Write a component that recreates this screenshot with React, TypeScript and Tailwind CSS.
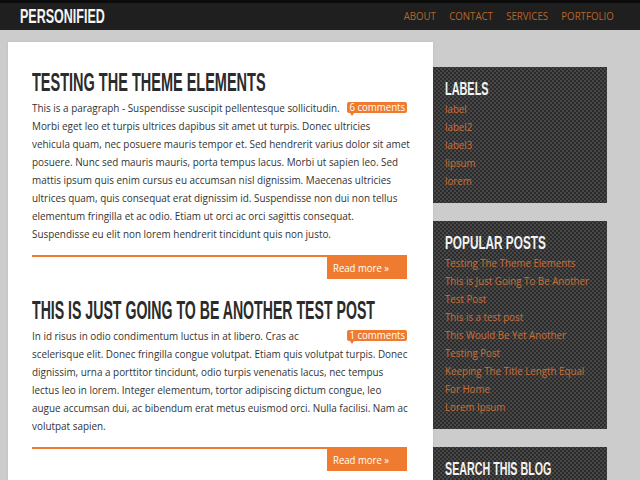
const heading = "font-['Liberation_Sans',sans-serif] font-bold uppercase origin-left whitespace-nowrap";
const squeezed = "block origin-left scale-x-[0.9] whitespace-nowrap";
const body = ["Morbi eget leo et turpis ultrices dapibus sit amet ut turpis. Donec ultricies","vehicula quam, nec posuere mauris tempor et. Sed hendrerit varius dolor sit amet","posuere. Nunc sed mauris mauris, porta tempus lacus. Morbi ut sapien leo. Sed","mattis ipsum quis enim cursus eu accumsan nisl dignissim. Maecenas ultricies","ultrices quam, quis consequat erat dignissim id. Suspendisse non dui non tellus","elementum fringilla et ac odio. Etiam ut orci ac orci sagittis consequat.","Suspendisse eu elit non lorem hendrerit tincidunt quis non justo."];
const body2 = ["scelerisque elit. Donec fringilla congue volutpat. Etiam quis volutpat turpis. Donec","dignissim, urna a porttitor tincidunt, odio turpis venenatis lacus, nec tempus","lectus leo in lorem. Integer elementum, tortor adipiscing dictum congue, leo","augue accumsan dui, ac bibendum erat metus euismod orci. Nulla facilisi. Nam ac","volutpat sapien."];

function Post({ title, first, badge, lines, sx, mt }: { title: string; first: string; badge: string; lines: string[]; sx: string; mt: string }) {
  return (
    <article className={mt}>
      <h2 className={`${heading} ${sx} text-[25px] leading-[32px] text-[#2b2b2b]`}>{title}</h2>
      <div className="mt-[1px] text-[11px] leading-[18px] text-[#333]">
        <div className="relative">
          <span className={squeezed}>{first}</span>
          <span className="absolute right-[1px] top-[3px] h-[11px] w-[60px] rounded-[2px] bg-[#ee7b30] text-center text-[10.5px] leading-[10px] text-[#fff]">
            <span className="block scale-x-[0.92] whitespace-nowrap">{badge}</span>
            <span className="absolute left-[3px] top-[11px] h-0 w-0 border-x-[2px] border-t-[3px] border-x-transparent border-t-[#ee7b30]" />
          </span>
        </div>
        {lines.map((l) => <div key={l} className={squeezed}>{l}</div>)}
      </div>
      <div className="mt-[12px] mr-[1px] flex justify-end border-t-[2px] border-[#ee7b30]">
        <span className="-mt-[1px] h-[23px] w-[80px] bg-[#ee7b30] pl-[6px] text-[11px] leading-[23px] text-[#fff]">
          <span className="block origin-left scale-x-[0.87] whitespace-nowrap">Read more »</span>
        </span>
      </div>
    </article>
  );
}

function Widget({ title, items, cls, sx }: { title: string; items: string[]; cls: string; sx: string }) {
  return (
    <section className={`${cls} w-[174px] bg-[#484848] bg-[radial-gradient(circle,#2b2b2b_1.1px,transparent_1.3px),radial-gradient(circle,#2b2b2b_1.1px,transparent_1.3px)] bg-[length:4px_4px] bg-[position:0_0,2px_2px] pl-[12px] pt-[11px]`}>
      <h3 className={`${heading} ${sx} text-[19px] leading-[22px] text-[#f2f2f2]`}>{title}</h3>
      <ul className="text-[11px] leading-[18px] text-[#c96f33]">
        {items.map((i) => <li key={i} className="origin-left scale-x-[0.886] whitespace-nowrap">{i}</li>)}
      </ul>
    </section>
  );
}

export default function App() {
  return (
    <div className="h-[480px] w-[640px] overflow-hidden bg-[#cccccc] font-['Open_Sans','Noto_Sans',sans-serif]">
      <header className="flex h-[30px] items-center justify-between border-t-[3px] border-[#0c0c0c] bg-[#1f1f1f] pl-[20px] pr-[26px]">
        <div className={`${heading} mb-[3px] scale-x-[0.596] text-[21px] leading-[25px] text-[#f5f5f5]`}>Personified</div>
        <nav className="flex origin-right scale-x-[0.88] gap-[15px] text-[11px] uppercase text-[#b9642a]">
          <span>About</span><span>Contact</span><span>Services</span><span>Portfolio</span>
        </nav>
      </header>
      <div className="flex items-start pl-[8px] pt-[12px]">
        <main className="h-[500px] w-[425px] bg-[#fff] pl-[24px] pr-[25px] pt-[24px] shadow-[0_0_2px_#bbb]">
          <Post mt="" sx="scale-x-[0.58]" title="Testing the theme elements" first="This is a paragraph - Suspendisse suscipit pellentesque sollicitudin." badge="6 comments" lines={body} />
          <Post mt="mt-[15px]" sx="scale-x-[0.565]" title="This is just going to be another test post" first="In id risus in odio condimentum luctus in at libero. Cras ac" badge="1 comments" lines={body2} />
        </main>
        <aside className="flex flex-col gap-[18px] pt-[25px]">
          <Widget cls="h-[136px]" sx="scale-x-[0.573]" title="Labels" items={["label","label2","label3","lipsum","lorem"]} />
          <Widget cls="h-[208px]" sx="scale-x-[0.62]" title="Popular Posts" items={["Testing The Theme Elements","This is Just Going To Be Another","Test Post","This is a test post","This Would Be Yet Another","Testing Post","Keeping The Title Length Equal","For Home","Lorem Ipsum"]} />
          <Widget cls="h-[60px]" sx="scale-x-[0.563]" title="Search This Blog" items={[]} />
        </aside>
      </div>
    </div>
  );
}
